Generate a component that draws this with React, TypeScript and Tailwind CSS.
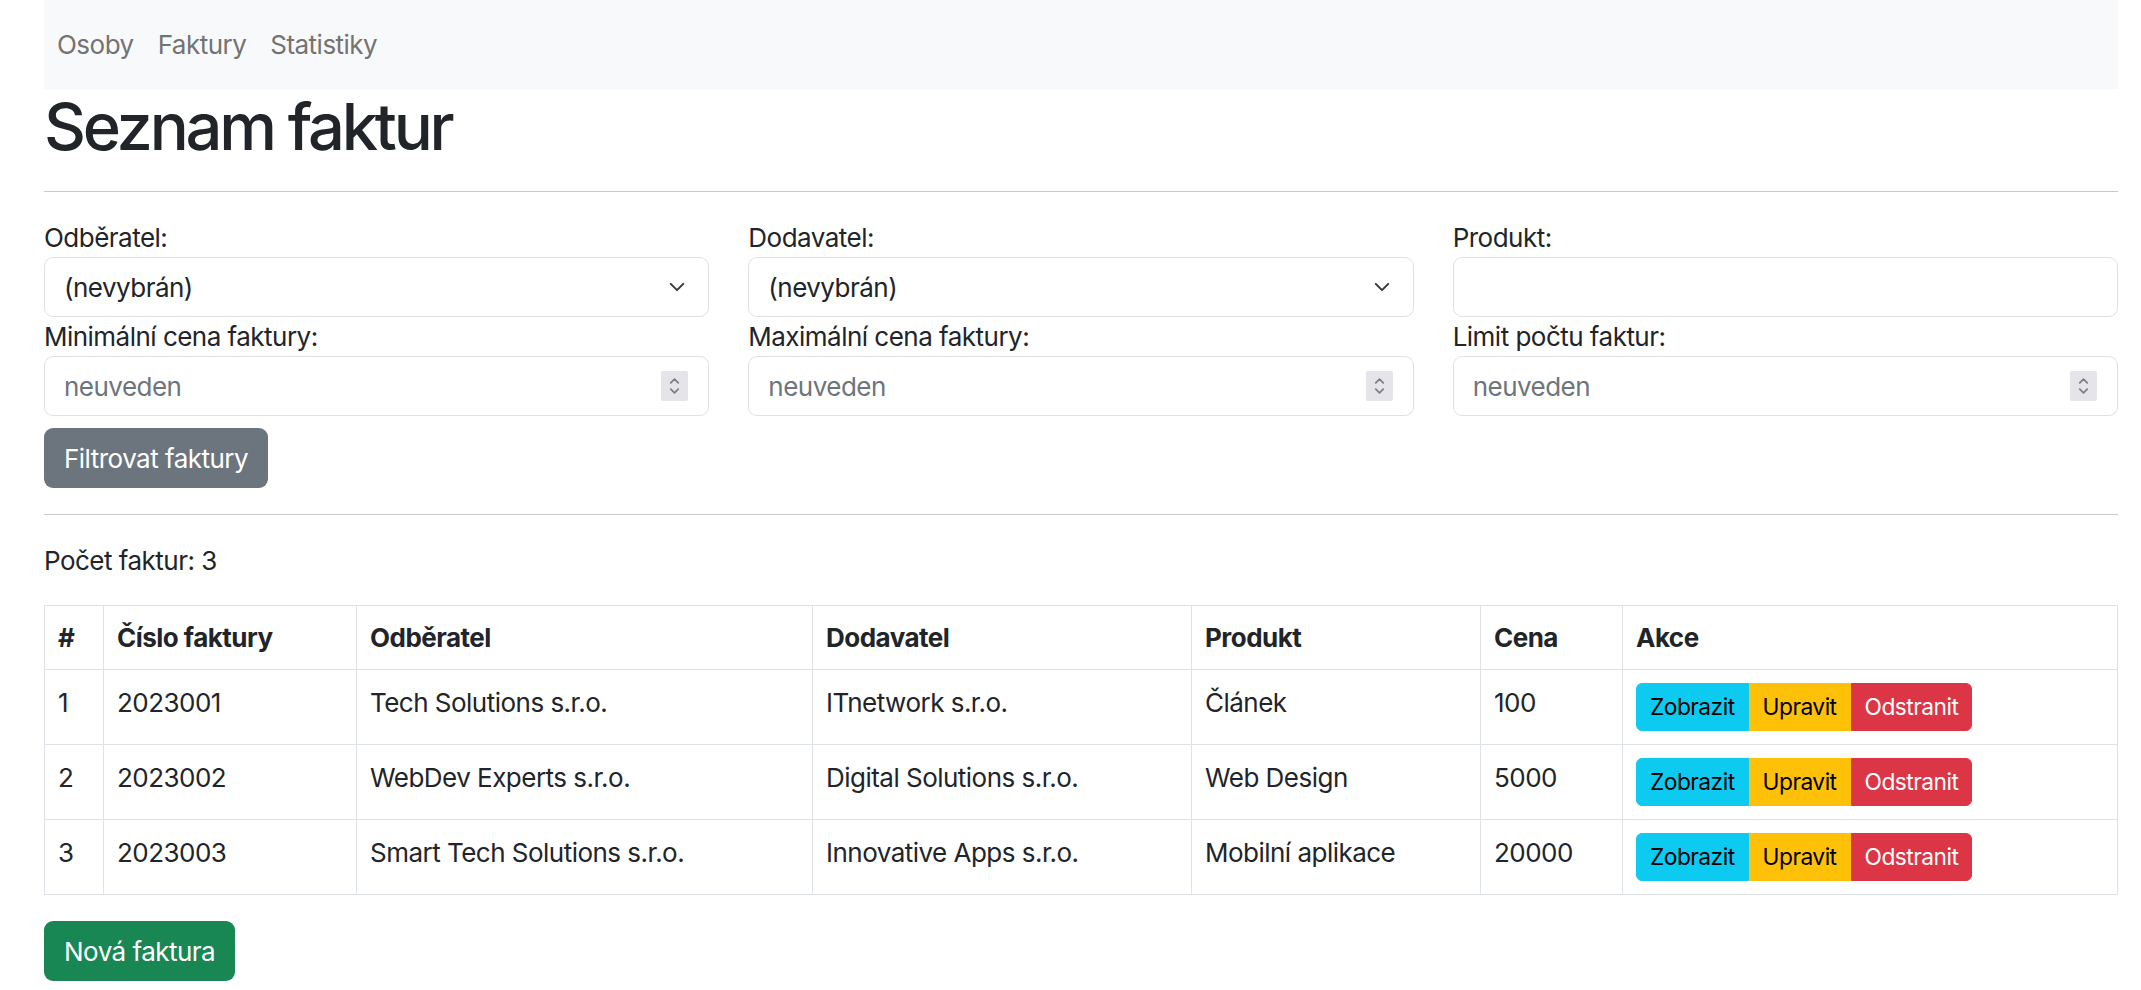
import type { ReactNode } from 'react';

type Invoice = {
  id: number;
  number: string;
  buyer: string;
  seller: string;
  product: string;
  price: number;
};

const invoices: Invoice[] = [
  { id: 1, number: '2023001', buyer: 'Tech Solutions s.r.o.', seller: 'ITnetwork s.r.o.', product: 'Článek', price: 100 },
  { id: 2, number: '2023002', buyer: 'WebDev Experts s.r.o.', seller: 'Digital Solutions s.r.o.', product: 'Web Design', price: 5000 },
  { id: 3, number: '2023003', buyer: 'Smart Tech Solutions s.r.o.', seller: 'Innovative Apps s.r.o.', product: 'Mobilní aplikace', price: 20000 },
];

const Chevron = () => (
  <svg
    className="pointer-events-none absolute right-[19px] top-1/2 h-[20px] w-[26px] -translate-y-1/2"
    viewBox="0 0 16 16"
    fill="none"
    stroke="#343a40"
    strokeWidth="1.6"
    strokeLinecap="round"
    strokeLinejoin="round"
  >
    <path d="m3 5.5 5 5 5-5" />
  </svg>
);

const Spinner = () => (
  <div className="pointer-events-none absolute right-[21px] top-1/2 flex h-[30px] w-[27px] -translate-y-1/2 items-center justify-center rounded-[2px] bg-[#e4e4e9]">
    <svg viewBox="0 0 12 20" className="h-[26px] w-[15px]" fill="none" stroke="#7d7d86" strokeWidth="1.4" strokeLinecap="round" strokeLinejoin="round">
      <path d="M3 7.5 6 4.5l3 3" />
      <path d="M3 12.5l3 3 3-3" />
    </svg>
  </div>
);

const Field = ({ label, children }: { label: string; children: ReactNode }) => (
  <div>
    <label className="block">{label}</label>
    {children}
  </div>
);

const controlClass =
  'block w-full h-[60px] rounded-[9px] border border-[#dee2e6] bg-white px-[19px] text-[26px] tracking-[-0.02em] text-[#212529] outline-none placeholder:text-[#6c757d]';

const SelectBox = () => (
  <div className="relative">
    <select className={`${controlClass} appearance-none`} defaultValue="">
      <option value="">(nevybrán)</option>
    </select>
    <Chevron />
  </div>
);

const NumberBox = () => (
  <div className="relative">
    <input type="text" className={controlClass} placeholder="neuveden" />
    <Spinner />
  </div>
);

export default function App() {
  return (
    <div className="min-h-screen bg-white pb-[11px] pl-[44px] pr-[23px] font-['Inter',sans-serif] text-[26px] leading-[39px] tracking-[-0.02em] text-[#212529]">
      <nav className="flex h-[89px] items-center bg-[#f8f9fa]">
        {['Osoby', 'Faktury', 'Statistiky'].map((link) => (
          <a key={link} className="px-[12px] text-[#737373] first:pl-[13px]">
            {link}
          </a>
        ))}
      </nav>

      <h1 className="text-[65px] font-medium leading-[76px] tracking-[-0.05em]">Seznam faktur</h1>
      <hr className="my-[26px] border-t border-[#c8c9ca]" />

      <div className="grid grid-cols-3 gap-x-[39px]">
        <div>
          <Field label="Odběratel:">
            <SelectBox />
          </Field>
          <Field label="Minimální cena faktury:">
            <NumberBox />
          </Field>
        </div>
        <div>
          <Field label="Dodavatel:">
            <SelectBox />
          </Field>
          <Field label="Maximální cena faktury:">
            <NumberBox />
          </Field>
        </div>
        <div>
          <Field label="Produkt:">
            <input type="text" className={controlClass} />
          </Field>
          <Field label="Limit počtu faktur:">
            <NumberBox />
          </Field>
        </div>
      </div>

      <button className="mt-[12px] h-[60px] rounded-[9px] bg-[#6c757d] px-[20px] text-white">Filtrovat faktury</button>

      <hr className="my-[26px] border-t border-[#c8c9ca]" />

      <p className="mb-[25px]">Počet faktur: 3</p>

      <table className="mb-[26px] w-full table-fixed border-collapse border border-[#dee2e6]">
        <colgroup>
          <col className="w-[59px]" />
          <col className="w-[253px]" />
          <col className="w-[456px]" />
          <col className="w-[379px]" />
          <col className="w-[289px]" />
          <col className="w-[142px]" />
          <col />
        </colgroup>
        <thead>
          <tr>
            {['#', 'Číslo faktury', 'Odběratel', 'Dodavatel', 'Produkt', 'Cena', 'Akce'].map((h) => (
              <th key={h} className="border border-[#dee2e6] px-[13px] py-[12px] text-left align-top font-bold">
                {h}
              </th>
            ))}
          </tr>
        </thead>
        <tbody>
          {invoices.map((inv) => (
            <tr key={inv.id}>
              <td className="border border-[#dee2e6] p-[13px] align-top">{inv.id}</td>
              <td className="border border-[#dee2e6] p-[13px] align-top">{inv.number}</td>
              <td className="border border-[#dee2e6] p-[13px] align-top">{inv.buyer}</td>
              <td className="border border-[#dee2e6] p-[13px] align-top">{inv.seller}</td>
              <td className="border border-[#dee2e6] p-[13px] align-top">{inv.product}</td>
              <td className="border border-[#dee2e6] p-[13px] align-top">{inv.price}</td>
              <td className="border border-[#dee2e6] p-[13px] align-top">
                <div className="inline-flex text-[22.75px] leading-[34px]">
                  <button className="rounded-l-[6px] border border-[#0dcaf0] bg-[#0dcaf0] px-[13px] py-[6px] text-black">Zobrazit</button>
                  <button className="border border-[#ffc107] bg-[#ffc107] px-[13px] py-[6px] text-black">Upravit</button>
                  <button className="rounded-r-[6px] border border-[#dc3545] bg-[#dc3545] px-[13px] py-[6px] text-white">Odstranit</button>
                </div>
              </td>
            </tr>
          ))}
        </tbody>
      </table>

      <button className="h-[60px] rounded-[9px] bg-[#198754] px-[20px] text-white">Nová faktura</button>
    </div>
  );
}
